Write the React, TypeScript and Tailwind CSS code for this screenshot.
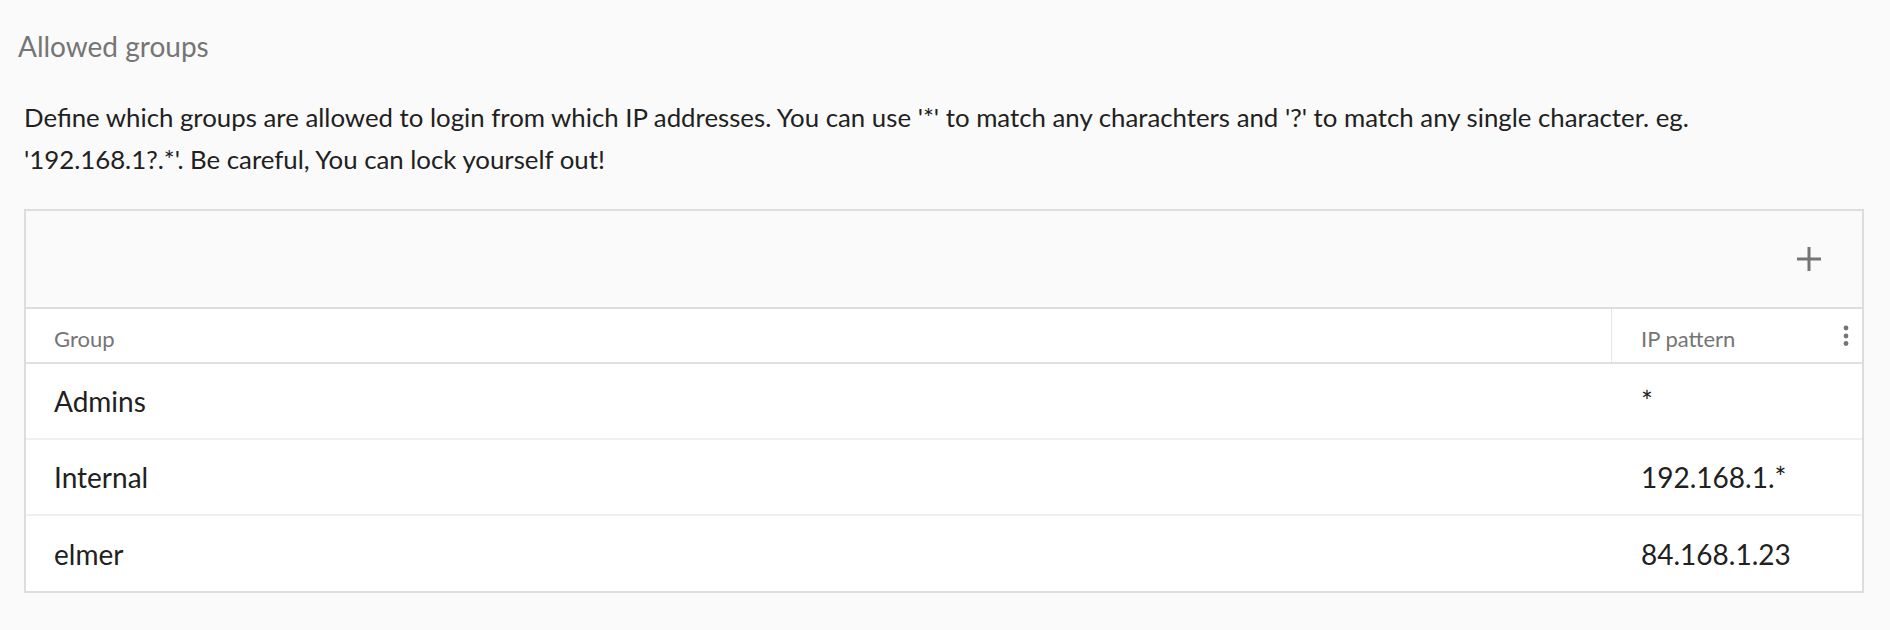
import React from "react";

const rows = [
  { group: "Admins", ip: "*" },
  { group: "Internal", ip: "192.168.1.*" },
  { group: "elmer", ip: "84.168.1.23" },
];

function PlusIcon() {
  return (
    <svg width="24" height="24" viewBox="0 0 24 24" className="block">
      <rect x="10.5" y="0" width="3" height="24" fill="#757575" />
      <rect x="0" y="10.5" width="24" height="3" fill="#757575" />
    </svg>
  );
}

function KebabIcon() {
  return (
    <svg width="6" height="22" viewBox="0 0 6 22" className="block">
      <circle cx="3" cy="3" r="2.4" fill="#757575" />
      <circle cx="3" cy="11" r="2.4" fill="#757575" />
      <circle cx="3" cy="18.5" r="2.4" fill="#757575" />
    </svg>
  );
}

export default function App() {
  return (
    <div
      className="min-h-[630px] w-full bg-[#fafafa] pt-[31px] pb-[37px]"
      style={{ fontFamily: "Lato, 'Open Sans', Arial, sans-serif" }}
    >
      <h2 className="pl-[18px] text-[28px] leading-[31px] font-normal text-[#757575]">
        Allowed groups
      </h2>
      <div className="pl-6 pr-[26px]">
        <p className="mt-[35px] max-w-[1720px] text-[25.8px] leading-[41.6px] text-[#212121]">
          Define which groups are allowed to login from which IP addresses. You can use '*' to
          match any charachters and '?' to match any single character. eg. '192.168.1?.*'. Be
          careful, You can lock yourself out!
        </p>
        <div className="mt-[29px] border-2 border-[#dddddd] bg-white">
          <div className="flex h-[98px] items-center justify-end border-b-2 border-[#dddddd] bg-[#fafafa] pr-[41px]">
            <PlusIcon />
          </div>
          <div className="flex h-[55px] items-stretch border-b-2 border-[#e0e0e0]">
            <div className="flex flex-1 items-center pl-[28px] pt-[5px] text-[22px] text-[#757575]">
              Group
            </div>
            <div className="w-px bg-[#e6e6e6]" />
            <div className="flex w-[250px] items-center justify-between pl-[29px] pr-[13px] text-[22px] text-[#757575]">
              <span className="pt-[5px]">IP pattern</span>
              <KebabIcon />
            </div>
          </div>
          {rows.map((r, i) => (
            <div
              key={r.group}
              className={
                i < rows.length - 1
                  ? "flex h-[76px] items-center border-b-2 border-[#f0f0f0] text-[28px] text-[#212121]"
                  : "flex h-[75px] items-center text-[28px] text-[#212121]"
              }
            >
              <div className="flex-1 pl-[28px]">{r.group}</div>
              <div className="w-[251px] pl-[30px]">{r.ip}</div>
            </div>
          ))}
        </div>
      </div>
    </div>
  );
}
